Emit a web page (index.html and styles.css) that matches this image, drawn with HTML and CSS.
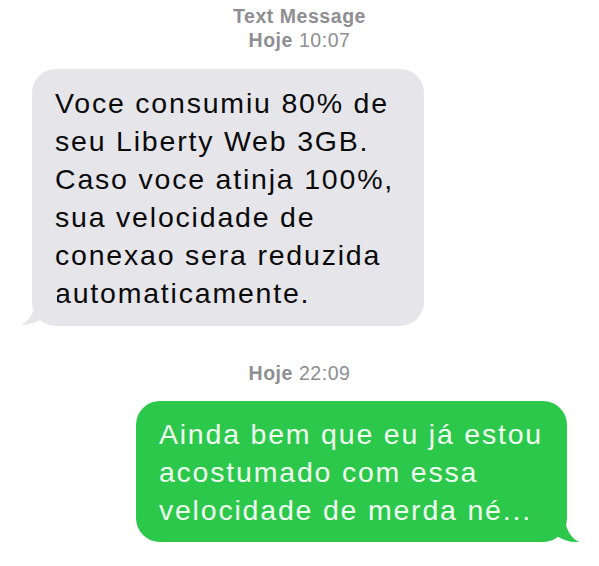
FILE: index.html
```html
<!DOCTYPE html>
<html>
<head>
<meta charset="utf-8">
<link rel="stylesheet" href="styles.css">
</head>
<body>
<div class="thread">
  <div class="stamp first"><b>Text Message</b><br><b>Hoje</b> 10:07</div>
  <div class="row in">
    <div class="bubble gray">Voce consumiu 80% de<br>seu Liberty Web 3GB.<br>Caso voce atinja 100%,<br>sua velocidade de<br>conexao sera reduzida<br>automaticamente.<svg class="tail tail-left" width="36" height="34" viewBox="0 0 36 34"><path d="M36 28 Q28 27 24 24 Q12 32 0 32 Q14 25 15 3 L36 3 Z" fill="#e5e5ea"/></svg></div>
  </div>
  <div class="stamp second"><b>Hoje</b> 22:09</div>
  <div class="row out">
    <div class="bubble green">Ainda bem que eu já estou<br>acostumado com essa<br>velocidade de merda né...<svg class="tail tail-right" width="36" height="34" viewBox="0 0 36 34"><path d="M0 30 Q8 29 12 26 Q24 34 36 33 Q22 26 21 3 L0 3 Z" fill="#2bc84b"/></svg></div>
  </div>
</div>
</body>
</html>
```
FILE: styles.css
```css
html, body {
  margin: 0;
  padding: 0;
  background: #ffffff;
}
.thread {
  width: 599px;
  height: 566px;
  display: flex;
  flex-direction: column;
  font-family: "Liberation Sans", Arial, sans-serif;
  overflow: hidden;
}
.stamp {
  text-align: center;
  color: #8e8e93;
  font-size: 19.5px;
  line-height: 24px;
  letter-spacing: 0.55px;
}
.stamp.first {
  padding-top: 4px;
}
.stamp.second {
  margin-top: 35px;
}
.row {
  display: flex;
}
.row.in {
  margin-top: 17px;
  padding-left: 32px;
}
.row.out {
  margin-top: 16px;
  justify-content: flex-end;
  padding-right: 32px;
}
.bubble {
  position: relative;
  font-size: 28.5px;
  line-height: 38px;
  letter-spacing: 1.8px;
  border-radius: 24px;
}
.gray {
  background: #e5e5ea;
  color: #0a0a0a;
  padding: 15px 30px 14px 23px;
}
.green {
  background: #2bc84b;
  color: #f0fff0;
  padding: 14px 24px 13px 23px;
}
.tail {
  position: absolute;
  bottom: -1px;
}
.tail-left {
  left: -11px;
}
.tail-right {
  right: -12px;
}
```
